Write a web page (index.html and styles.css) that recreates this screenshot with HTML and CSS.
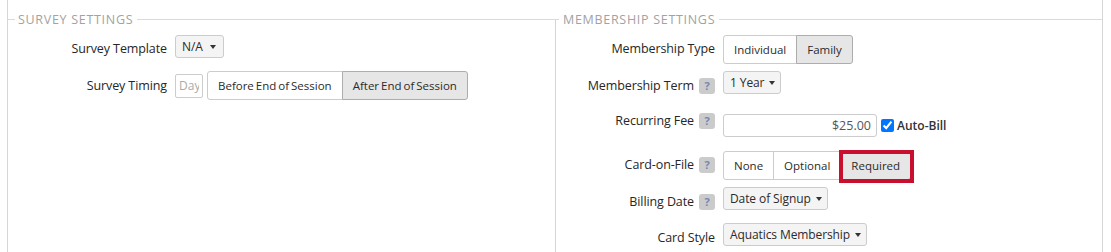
FILE: index.html
```html
<!DOCTYPE html>
<html lang="en">
<head>
<meta charset="utf-8">
<title>Settings</title>
<link rel="stylesheet" href="styles.css">
</head>
<body>
<div class="panel">
  <div class="columns">
    <fieldset class="section">
      <legend class="section-title">Survey Settings</legend>
      <div class="row">
        <div class="label">Survey Template</div>
        <div class="select select--min"><span>N/A</span><span class="caret"></span></div>
      </div>
      <div class="row">
        <div class="label label--low">Survey Timing</div>
        <div class="timing">
          <input class="day-input" type="text" placeholder="Day">
          <div class="btn-group">
            <button class="btn" type="button">Before End of Session</button>
            <button class="btn is-active" type="button">After End of Session</button>
          </div>
        </div>
      </div>
    </fieldset>
    <fieldset class="section section--right">
      <legend class="section-title">Membership Settings</legend>
      <div class="row">
        <div class="label">Membership Type</div>
        <div class="btn-group">
          <button class="btn" type="button">Individual</button>
          <button class="btn is-active" type="button">Family</button>
        </div>
      </div>
      <div class="row row--43">
        <div class="label label--low">Membership Term <span class="help">?</span></div>
        <div class="select"><span>1 Year</span><span class="caret"></span></div>
      </div>
      <div class="row row--37">
        <div class="label label--high">Recurring Fee <span class="help">?</span></div>
        <div class="fee">
          <input class="fee-input" type="text" value="$25.00">
          <label class="check"><input type="checkbox" checked>Auto-Bill</label>
        </div>
      </div>
      <div class="row">
        <div class="label">Card-on-File <span class="help">?</span></div>
        <div class="btn-group">
          <button class="btn" type="button">None</button>
          <button class="btn" type="button">Optional</button>
          <button class="btn is-active btn--flagged" type="button">Required</button>
        </div>
      </div>
      <div class="row">
        <div class="label label--low">Billing Date <span class="help">?</span></div>
        <div class="select"><span>Date of Signup</span><span class="caret"></span></div>
      </div>
      <div class="row">
        <div class="label label--low">Card Style</div>
        <div class="select"><span>Aquatics Membership</span><span class="caret"></span></div>
      </div>
    </fieldset>
  </div>
</div>
</body>
</html>
```
FILE: styles.css
```css
* { box-sizing: border-box; }

body {
  margin: 0;
  font-family: "Open Sans", "Liberation Sans", sans-serif;
  color: #2b2b2b;
  background: #fff;
}

.panel {
  margin: 0 8px 0 7px;
  border-left: 1px solid #d6d6d6;
  border-right: 1px solid #d6d6d6;
  padding-top: 10px;
  min-height: 260px;
}

.columns {
  display: grid;
  grid-template-columns: 1fr 1fr;
}

.section {
  margin: 0;
  padding: 6px 0 0;
  border: 0;
  border-top: 1px solid #dadada;
  min-width: 0;
}

.section--right {
  border-left: 1px solid #d6d6d6;
}

.section-title {
  font-size: 12.5px;
  line-height: 19px;
  letter-spacing: 0.7px;
  text-transform: uppercase;
  color: #a2a2a2;
  margin-left: 7px;
  padding: 0 4px 0 3px;
}

.section--right .section-title {
  margin-left: 3px;
  padding-left: 4px;
}

.row {
  display: flex;
  align-items: flex-start;
  gap: 8px;
  height: 36px;
}

.row--43 { height: 43px; }
.row--37 { height: 37px; }

.label {
  width: 159px;
  flex: none;
  display: flex;
  justify-content: flex-end;
  align-items: center;
  gap: 5px;
  font-size: 12.5px;
  line-height: 18px;
  letter-spacing: -0.1px;
  padding-top: 5px;
  color: #262626;
}

.label--low { padding-top: 6px; }
.label--high { padding-top: 0; margin-top: -2px; }

.help {
  width: 16px;
  height: 16px;
  border-radius: 3px;
  background: #cbcbcb;
  color: #7488b0;
  font-size: 11px;
  font-weight: 700;
  line-height: 16px;
  letter-spacing: 0;
  text-align: center;
}

.select {
  display: inline-flex;
  align-items: center;
  gap: 5px;
  height: 23px;
  padding: 0 5px 0 6px;
  border: 1px solid #ccc;
  border-radius: 3px;
  background: #f4f4f4;
  font-size: 12px;
  letter-spacing: -0.1px;
  color: #2b2b2b;
  white-space: nowrap;
}

.select--min {
  min-width: 49px;
  justify-content: space-between;
  padding-right: 7px;
}

.caret {
  width: 0;
  height: 0;
  border-left: 3.5px solid transparent;
  border-right: 3.5px solid transparent;
  border-top: 4px solid #333;
}

.timing {
  display: flex;
  align-items: center;
  gap: 4px;
}

.day-input {
  width: 28px;
  height: 24px;
  border: 1px solid #ccc;
  border-radius: 2px;
  padding: 0 3px;
  font: 12px "Open Sans", sans-serif;
  color: #333;
}

.day-input::placeholder { color: #aaa; }

.btn-group {
  display: inline-flex;
  height: 29px;
}

.btn {
  font: 11.5px "Open Sans", sans-serif;
  word-spacing: -1px;
  color: #2b2b2b;
  background: #fff;
  border: 1px solid #ccc;
  padding: 0 10px;
  margin: 0;
  height: 29px;
  white-space: nowrap;
}

.btn + .btn { margin-left: -1px; }
.btn:first-child { border-radius: 3px 0 0 3px; }
.btn:last-child { border-radius: 0 3px 3px 0; }

.btn.is-active {
  background: #e6e6e6;
  border-color: #adadad;
  position: relative;
}

.btn--flagged::after {
  content: "";
  position: absolute;
  left: -2px;
  right: -4px;
  top: -2px;
  bottom: -4px;
  border: 4px solid #c8102e;
}

.fee {
  display: flex;
  align-items: center;
}

.fee-input {
  width: 154px;
  height: 23px;
  border: 1px solid #ccc;
  border-radius: 3px;
  padding: 0 5px;
  text-align: right;
  font: 12.5px "Open Sans", sans-serif;
  color: #555;
}

.check {
  display: inline-flex;
  align-items: center;
  font-size: 12px;
  font-weight: 600;
  color: #333;
}

.check input {
  width: 13px;
  height: 13px;
  margin: 0 3px 0 4px;
}
```
